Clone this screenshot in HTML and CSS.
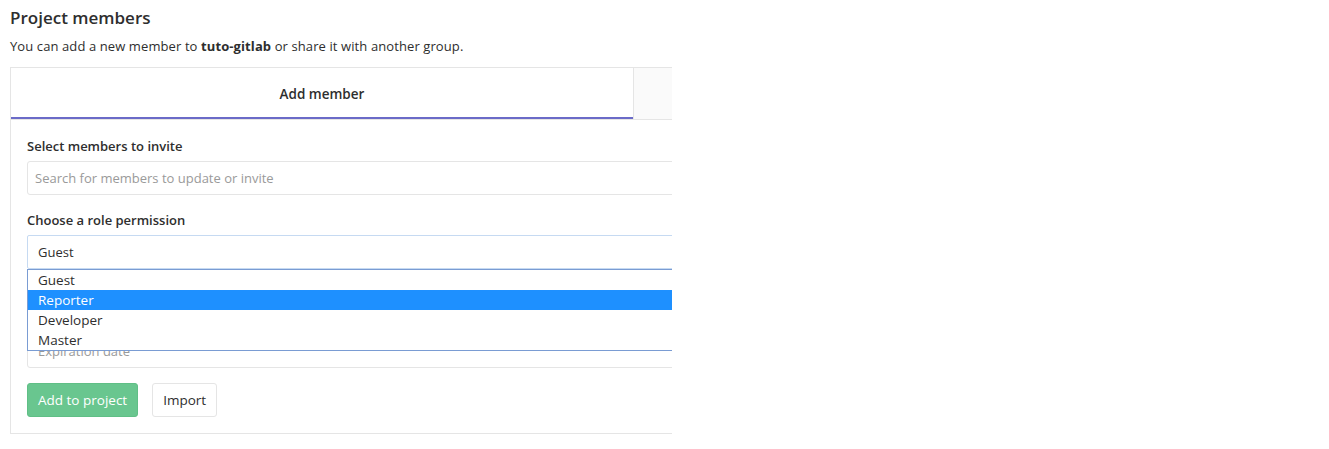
FILE: index.html
```html
<!DOCTYPE html>
<html>
<head>
<meta charset="utf-8">
<link rel="stylesheet" href="styles.css">
</head>
<body>
<div class="page">
  <h3 class="title">Project members</h3>
  <p class="desc">You can add a new member to <strong>tuto-gitlab</strong> or share it with another group.</p>
  <div class="card">
    <div class="tabs">
      <div class="tab active">Add member</div>
      <div class="tab"></div>
    </div>
    <div class="form">
      <div class="group">
        <label class="label">Select members to invite</label>
        <div class="input placeholder">Search for members to update or invite</div>
      </div>
      <div class="group select-group">
        <label class="label">Choose a role permission</label>
        <div class="input select">Guest</div>
        <ul class="dropdown">
          <li>Guest</li>
          <li class="selected">Reporter</li>
          <li>Developer</li>
          <li>Master</li>
        </ul>
      </div>
      <div class="group">
        <div class="input placeholder date">Expiration date</div>
      </div>
      <div class="actions">
        <button class="btn btn-create">Add to project</button>
        <button class="btn btn-default">Import</button>
      </div>
    </div>
  </div>
</div>
</body>
</html>
```
FILE: styles.css
```css
html, body {
  margin: 0;
  padding: 0;
  background: #fff;
}
body {
  font-family: "Open Sans", "Noto Sans", sans-serif;
  color: #2e2e2e;
  font-size: 13px;
}
.page {
  width: 662px;
  padding-left: 10px;
  overflow: hidden;
}
.title {
  margin: 0;
  padding-top: 7px;
  font-size: 17px;
  line-height: 22px;
  font-weight: 600;
}
.desc {
  margin: 8px 0 0;
  line-height: 18px;
  font-size: 13px;
  letter-spacing: 0.1px;
}
.desc strong {
  font-weight: 700;
}
.card {
  margin-top: 12px;
  width: 1246px;
  border: 1px solid #e5e5e5;
  box-sizing: border-box;
}
.tabs {
  display: flex;
  border-bottom: 1px solid #e5e5e5;
}
.tab {
  width: 622px;
  height: 51px;
  box-sizing: border-box;
  display: flex;
  align-items: center;
  justify-content: center;
  font-size: 13.5px;
  font-weight: 600;
  background: #fafafa;
  border-left: 1px solid #e5e5e5;
  color: #2e2e2e;
}
.tab.active {
  background: #fff;
  border-left: none;
  border-bottom: 2px solid #6b6bc8;
  padding-top: 2px;
}
.form {
  padding: 16px 16px 16px;
}
.group {
  margin-bottom: 15px;
  position: relative;
}
.select-group {
  margin-bottom: 65px;
}
.label {
  display: block;
  font-weight: 600;
  line-height: 20px;
  margin-bottom: 5px;
}
.input {
  height: 34px;
  box-sizing: border-box;
  border: 1px solid #e5e5e5;
  border-radius: 3px;
  padding: 0 7px;
  display: flex;
  align-items: center;
  font-size: 13px;
}
.placeholder {
  color: #9a9a9a;
}
.date {
  padding-left: 10px;
}
.select {
  border-color: #c6daf2;
  border-radius: 2px;
  padding-left: 10px;
  color: #2e2e2e;
}
.dropdown {
  position: absolute;
  left: 0;
  top: 59px;
  right: 0;
  margin: 0;
  padding: 0;
  list-style: none;
  background: #fff;
  border: 1px solid #7a9cd3;
  z-index: 5;
}
.dropdown li {
  height: 20px;
  line-height: 20px;
  padding-left: 10px;
  font-size: 13.5px;
  color: #2e2e2e;
}
.dropdown li.selected {
  background: #1e90ff;
  color: #fff;
}
.actions {
  display: flex;
  gap: 14px;
}
.btn {
  height: 34px;
  box-sizing: border-box;
  border-radius: 3px;
  font-family: inherit;
  font-size: 13.5px;
  padding: 0 10px;
  cursor: pointer;
}
.btn-create {
  background: #69c68f;
  border: 1px solid #60bf86;
  color: #fff;
}
.btn-default {
  background: #fff;
  border: 1px solid #e5e5e5;
  color: #2e2e2e;
}
```
